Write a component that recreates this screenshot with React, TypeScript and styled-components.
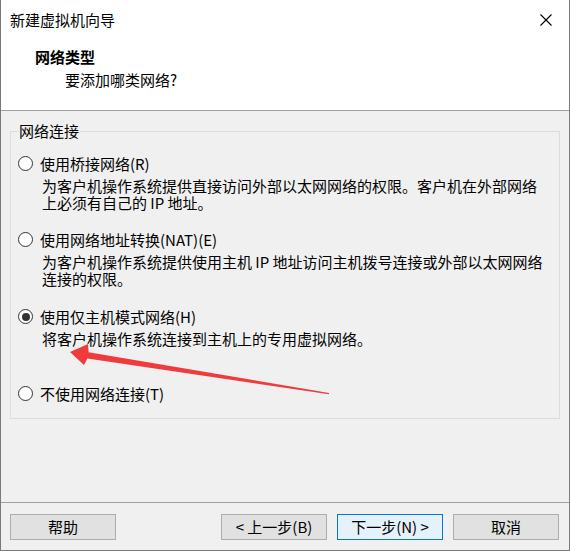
import styled, { createGlobalStyle } from "styled-components";

const GlobalStyle = createGlobalStyle`
  html, body {
    margin: 0;
    padding: 0;
    background: #ffffff;
  }
  * {
    box-sizing: border-box;
  }
`;

type Option = {
  label: string;
  desc: string[];
  checked?: boolean;
  top: number;
};

const options: Option[] = [
  {
    label: "使用桥接网络(R)",
    desc: [
      "为客户机操作系统提供直接访问外部以太网网络的权限。客户机在外部网络",
      "上必须有自己的 IP 地址。",
    ],
    top: 23,
  },
  {
    label: "使用网络地址转换(NAT)(E)",
    desc: [
      "为客户机操作系统提供使用主机 IP 地址访问主机拨号连接或外部以太网网络",
      "连接的权限。",
    ],
    top: 20,
  },
  {
    label: "使用仅主机模式网络(H)",
    desc: ["将客户机操作系统连接到主机上的专用虚拟网络。"],
    checked: true,
    top: 21,
  },
  {
    label: "不使用网络连接(T)",
    desc: [],
    top: 38,
  },
];

const App = () => {
  return (
    <>
      <GlobalStyle />
      <Window>
        <TitleBar>
          <TitleText>新建虚拟机向导</TitleText>
          <CloseButton>
            <svg width="12" height="12" viewBox="0 0 12 12">
              <path d="M0.5 0.5 L11.5 11.5 M11.5 0.5 L0.5 11.5" stroke="#000" strokeWidth="1.1" fill="none" />
            </svg>
          </CloseButton>
        </TitleBar>

        <Header>
          <HeaderTitle>网络类型</HeaderTitle>
          <HeaderSub>要添加哪类网络?</HeaderSub>
        </Header>

        <Body>
          <Group>
            <GroupLabel>网络连接</GroupLabel>
            {options.map((o) => (
              <OptionBlock key={o.label} top={o.top}>
                <RadioRow>
                  <Radio checked={o.checked ? "true" : ""}>
                    {o.checked && <Dot />}
                  </Radio>
                  <RadioLabel>{o.label}</RadioLabel>
                </RadioRow>
                {o.desc.length > 0 && (
                  <Desc>
                    {o.desc.map((line) => (
                      <DescLine key={line}>{line}</DescLine>
                    ))}
                  </Desc>
                )}
              </OptionBlock>
            ))}
          </Group>
        </Body>

        <Footer>
          <Button>帮助</Button>
          <Spacer />
          <Button>&lt; 上一步(B)</Button>
          <Button focused="true">下一步(N) &gt;</Button>
          <Button>取消</Button>
        </Footer>

        {/* red annotation arrow drawn over the dialog */}
        <Arrow width="570" height="551" viewBox="0 0 570 551">
          <polygon
            points="70,352 88,344 88.6,352.2 329,393 329,394.2 87.4,358.6 84,365"
            fill="#ef3b3b"
          />
        </Arrow>
      </Window>
    </>
  );
};

const Window = styled.div`
  position: relative;
  width: 570px;
  height: 551px;
  border: 1px solid #7a7a7a;
  border-top: none;
  background: #f0f0f0;
  display: flex;
  flex-direction: column;
  font-family: "Noto Sans CJK SC", "Noto Sans", sans-serif;
  font-size: 15px;
  color: #000;
  overflow: hidden;
`;

const TitleBar = styled.div`
  height: 40px;
  background: #ffffff;
  display: flex;
  align-items: center;
  justify-content: space-between;
  padding-left: 9px;
`;

const TitleText = styled.span`
  line-height: 20px;
`;

const CloseButton = styled.div`
  width: 46px;
  height: 40px;
  display: flex;
  align-items: center;
  justify-content: center;
`;

const Header = styled.div`
  height: 71px;
  background: #ffffff;
  border-bottom: 1px solid #a0a0a0;
  padding-top: 7px;
  display: flex;
  flex-direction: column;
  gap: 3px;
`;

const HeaderTitle = styled.div`
  font-weight: bold;
  line-height: 20px;
  padding-left: 34px;
`;

const HeaderSub = styled.div`
  line-height: 20px;
  padding-left: 64px;
`;

const Body = styled.div`
  flex: 1;
  padding: 20px 0 0 9px;
`;

const Group = styled.div`
  position: relative;
  width: 550px;
  height: 288px;
  border: 1px solid #dcdcdc;
  padding-left: 7px;
`;

const GroupLabel = styled.span`
  position: absolute;
  top: -10px;
  left: 7px;
  padding: 0 1px;
  line-height: 18px;
  background: #f0f0f0;
`;

const OptionBlock = styled.div<{ top: number }>`
  margin-top: ${(p) => p.top}px;
`;

const RadioRow = styled.div`
  display: flex;
  align-items: center;
  height: 17px;
  gap: 7px;
`;

const Radio = styled.div<{ checked?: string }>`
  width: 15px;
  height: 15px;
  border-radius: 50%;
  border: 1px solid #333333;
  background: #ffffff;
  display: flex;
  align-items: center;
  justify-content: center;
  flex-shrink: 0;
`;

const Dot = styled.div`
  width: 8px;
  height: 8px;
  border-radius: 50%;
  background: #333333;
`;

const RadioLabel = styled.span`
  line-height: 17px;
  white-space: nowrap;
`;

const Desc = styled.div`
  margin-top: 5px;
  padding-left: 24px;
`;

const DescLine = styled.div`
  line-height: 17px;
  white-space: nowrap;
`;

const Footer = styled.div`
  height: 48px;
  border-top: 1px solid #a0a0a0;
  display: flex;
  align-items: flex-start;
  padding: 11px 10px 0 9px;
  gap: 10px;
`;

const Spacer = styled.div`
  flex: 1;
`;

const Button = styled.div<{ focused?: string }>`
  width: 106px;
  height: 26px;
  display: flex;
  align-items: center;
  justify-content: center;
  line-height: 20px;
  background: ${(p) => (p.focused ? "#e5f1fb" : "#e1e1e1")};
  border: 1px solid ${(p) => (p.focused ? "#0078d7" : "#adadad")};
  white-space: nowrap;
`;

const Arrow = styled.svg`
  position: absolute;
  left: -1px;
  top: 0;
  pointer-events: none;
`;

export default App;
